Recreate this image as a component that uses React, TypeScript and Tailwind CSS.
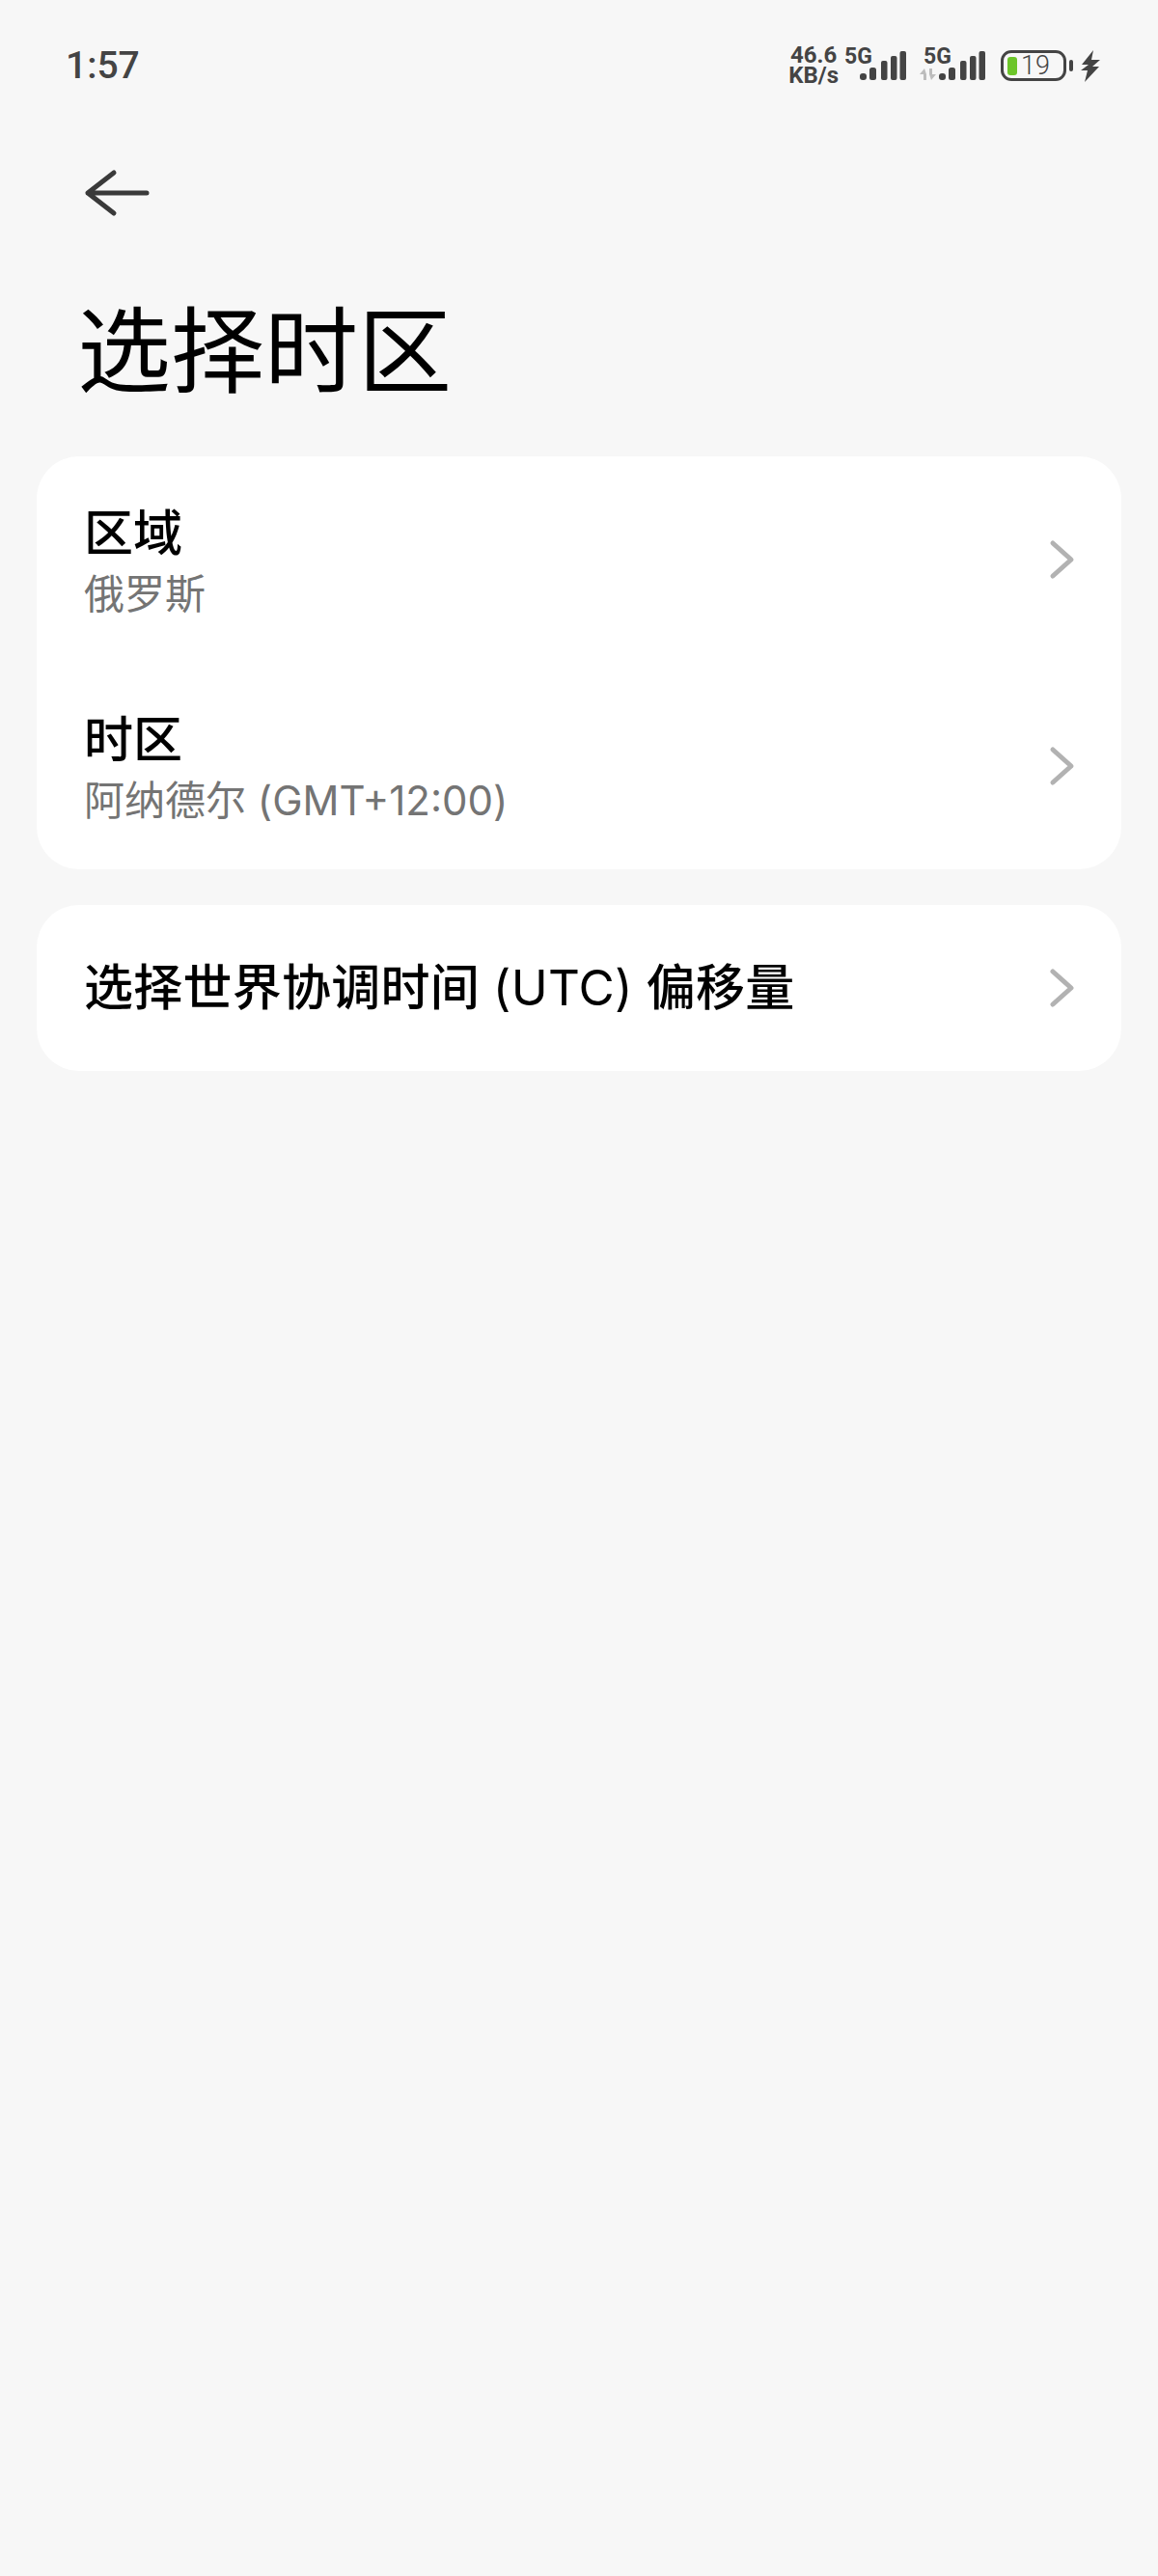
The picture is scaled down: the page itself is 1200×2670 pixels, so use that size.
const cjk = "font-['Inter','Noto_Sans_CJK_SC','Noto_Sans',sans-serif]";
const han = "font-['Noto_Sans_CJK_SC','Noto_Sans',sans-serif]";

function Chevron() {
  return (
    <svg width="28" height="46" viewBox="0 0 28 46" fill="none" className="shrink-0">
      <path d="M5 6 L24 23 L5 40" stroke="#b2b2b2" strokeWidth="5" strokeLinecap="round" strokeLinejoin="round" />
    </svg>
  );
}

function Signal() {
  return (
    <svg width="48" height="30" viewBox="0 0 48 30" className="shrink-0">
      <rect x="0" y="23" width="7" height="7" rx="3" fill="#444" />
      <rect x="10" y="17" width="7" height="13" rx="2.5" fill="#444" />
      <rect x="22" y="10" width="6.5" height="20" rx="2" fill="#444" />
      <rect x="32" y="5" width="6.5" height="25" rx="2" fill="#444" />
      <rect x="41.5" y="0" width="6.5" height="30" rx="2" fill="#444" />
    </svg>
  );
}

function Row({ title, sub }: { title: React.ReactNode; sub?: string }) {
  return (
    <div className={`flex items-center justify-between ${sub ? "h-[214px]" : "h-[172px]"} pl-[49px] pr-[48px]`}>
      <div className={`flex flex-col ${sub ? "pt-[6px]" : ""}`}>
        <span className="text-[51px] leading-[62px] text-black font-medium">{title}</span>
        {sub ? <span className="text-[42px] leading-[58px] text-[#747474] mt-[3px]">{sub}</span> : null}
      </div>
      <Chevron />
    </div>
  );
}

export default function App() {
  return (
    <div className={`w-[1200px] h-[2670px] bg-[#f7f7f7] overflow-hidden ${cjk}`}>
      <div className="flex items-center justify-between h-[70px] mt-[33px] pl-[68px] pr-[60px]">
        <span className="text-[39px] leading-none text-[#444] font-['Roboto',sans-serif] font-medium">1:57</span>
        <div className="flex items-center">
          <div className="flex flex-col font-['Roboto',sans-serif] font-bold text-[#444] text-[24px] leading-[21px] items-center">
            <span>46.6</span>
            <span>KB/s</span>
          </div>
          <div className="relative h-[40px] w-[64px] ml-[6px]">
            <span className="absolute left-0 top-[1px] font-['Roboto',sans-serif] font-bold text-[23px] leading-[20px] text-[#444]">5G</span>
            <div className="absolute right-0 bottom-[5px] flex"><Signal /></div>
          </div>
          <div className="relative h-[40px] w-[68px] ml-[14px]">
            <span className="absolute left-[4px] top-[1px] font-['Roboto',sans-serif] font-bold text-[23px] leading-[20px] text-[#444]">5G</span>
            <svg width="18" height="12" viewBox="0 0 18 12" className="absolute left-0 bottom-[5px]">
              <path d="M4 12V6H0L5 0 7 6H7V12Z M10 0H13V6H17L12 12 10 6H10Z" fill="#bdbdbd" />
            </svg>
            <div className="absolute right-0 bottom-[5px] flex"><Signal /></div>
          </div>
          <div className="ml-[16px] w-[68px] h-[32px] rounded-[11px] border-[3px] border-[#444] flex items-center">
            <div className="ml-[4px] w-[10px] h-[19px] rounded-[3px] bg-[#6cc52a]" />
            <span className="ml-[4px] text-[27px] leading-none text-[#444] font-['Roboto',sans-serif] font-light">19</span>
          </div>
          <div className="ml-[3px] w-[4px] h-[12px] rounded-[2px] bg-[#444]" />
          <svg width="20" height="33" viewBox="0 0 20 33" className="ml-[8px]">
            <path d="M13 0 L1 15 L8 15 L0 21 L7 21 L4 33 L19 17 L12 17 L20 10 L11 10 Z" fill="#444" />
          </svg>
        </div>
      </div>

      <div className="mt-[72px] pl-[86px]">
        <svg width="72" height="50" viewBox="0 0 72 50" fill="none">
          <path d="M32 4 L5 25 L32 46 M5 25 H66" stroke="#3a3a3a" strokeWidth="5" strokeLinecap="round" strokeLinejoin="round" />
        </svg>
      </div>

      <h1 className={`mt-[67px] pl-[80px] text-[97px] leading-[130px] text-black font-normal ${han}`}>选择时区</h1>

      <div className="mt-[51px] mx-[38px] flex flex-col gap-[37px]">
        <div className="bg-white rounded-[44px]">
          <Row title="区域" sub="俄罗斯" />
          <Row title="时区" sub="阿纳德尔 (GMT+12:00)" />
        </div>
        <div className="bg-white rounded-[44px]">
          <Row title={<span className="tracking-[0.25px]">选择世界协调时间 <span className="font-normal">(UTC)</span> 偏移量</span>} />
        </div>
      </div>
    </div>
  );
}
